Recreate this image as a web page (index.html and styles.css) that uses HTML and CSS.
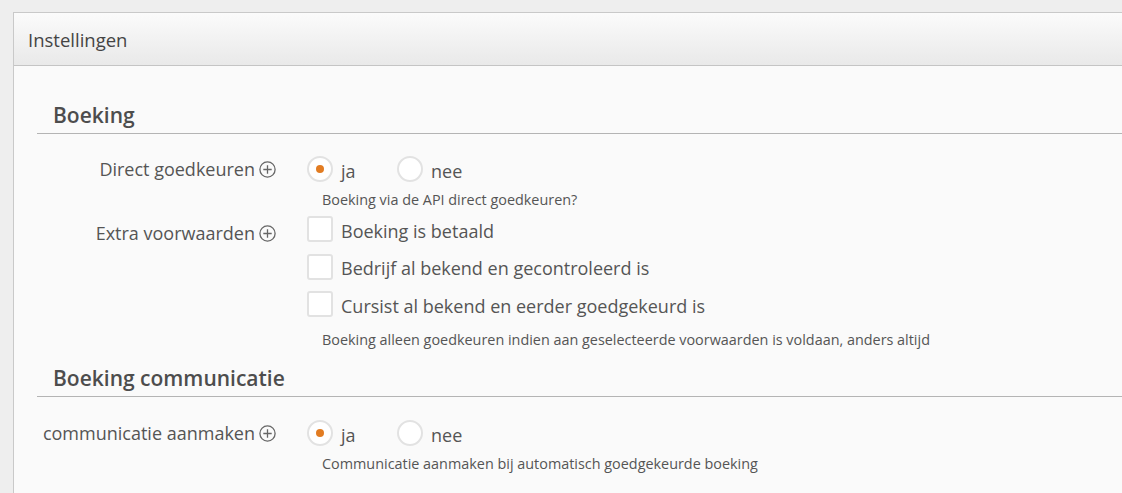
FILE: index.html
```html
<!DOCTYPE html>
<html lang="nl">
<head>
<meta charset="utf-8">
<title>Instellingen</title>
<link rel="stylesheet" href="styles.css">
</head>
<body>
<div class="panel">
  <div class="panel-head">Instellingen</div>
  <div class="panel-body">
    <section class="section">
      <h2 class="section-title">Boeking</h2>
      <div class="field">
        <div class="field-label">Direct goedkeuren
          <svg class="info" viewBox="0 0 17 17"><circle cx="8.5" cy="8.5" r="7.6"/><path d="M8.5 4.3v8.4M4.3 8.5h8.4"/></svg>
        </div>
        <div class="field-control">
          <div class="radios">
            <label class="radio"><span class="radio-box checked"></span><span class="opt-text">ja</span></label>
            <label class="radio"><span class="radio-box"></span><span class="opt-text">nee</span></label>
          </div>
          <p class="help">Boeking via de API direct goedkeuren?</p>
        </div>
      </div>
      <div class="field">
        <div class="field-label field-label-low">Extra voorwaarden
          <svg class="info" viewBox="0 0 17 17"><circle cx="8.5" cy="8.5" r="7.6"/><path d="M8.5 4.3v8.4M4.3 8.5h8.4"/></svg>
        </div>
        <div class="field-control">
          <div class="checks">
            <label class="check"><span class="check-box"></span><span class="opt-text">Boeking is betaald</span></label>
            <label class="check"><span class="check-box"></span><span class="opt-text">Bedrijf al bekend en gecontroleerd is</span></label>
            <label class="check"><span class="check-box"></span><span class="opt-text">Cursist al bekend en eerder goedgekeurd is</span></label>
          </div>
          <p class="help help-wide">Boeking alleen goedkeuren indien aan geselecteerde voorwaarden is voldaan, anders altijd</p>
        </div>
      </div>
    </section>
    <section class="section">
      <h2 class="section-title">Boeking communicatie</h2>
      <div class="field">
        <div class="field-label">communicatie aanmaken
          <svg class="info" viewBox="0 0 17 17"><circle cx="8.5" cy="8.5" r="7.6"/><path d="M8.5 4.3v8.4M4.3 8.5h8.4"/></svg>
        </div>
        <div class="field-control">
          <div class="radios">
            <label class="radio"><span class="radio-box checked"></span><span class="opt-text">ja</span></label>
            <label class="radio"><span class="radio-box"></span><span class="opt-text">nee</span></label>
          </div>
          <p class="help">Communicatie aanmaken bij automatisch goedgekeurde boeking</p>
        </div>
      </div>
    </section>
  </div>
</div>
</body>
</html>
```

FILE: styles.css
```css
html, body {
  margin: 0;
  padding: 0;
}
body {
  background: #eeeeee;
  font-family: "Open Sans", "DejaVu Sans", sans-serif;
  color: #555;
  overflow: hidden;
  height: 493px;
}
.panel {
  margin: 12px -40px 0 13px;
  border: 1px solid #c9c9c9;
  border-right: none;
  background: #fafafa;
  min-height: 500px;
}
.panel-head {
  height: 53px;
  box-sizing: border-box;
  padding: 0 14px;
  display: flex;
  align-items: center;
  font-size: 18.5px;
  color: #444;
  background: linear-gradient(#fbfbfb, #e9e9e9);
  border-bottom: 1px solid #c4c4c4;
}
.panel-body {
  padding: 35px 0 0 23px;
}
.section + .section {
  margin-top: 15px;
}
.section-title {
  margin: 0;
  padding: 0 0 4px 16px;
  font-size: 21px;
  line-height: 28px;
  font-weight: 600;
  color: #4d4d4d;
  border-bottom: 1px solid #b4b4b4;
}
.field {
  display: grid;
  grid-template-columns: 239px 1fr;
  column-gap: 31px;
}
.section-title + .field {
  margin-top: 22px;
}
.section + .section .section-title + .field {
  margin-top: 23px;
}
.field + .field {
  margin-top: 7px;
}
.field-label {
  display: flex;
  align-items: center;
  justify-content: flex-end;
  gap: 4px;
  height: 26px;
  font-size: 18px;
  white-space: nowrap;
  color: #555;
}
.field-label-low {
  margin-top: 4px;
}
.info {
  width: 17px;
  height: 17px;
  flex: none;
  fill: none;
  stroke: #666;
  stroke-width: 1.3;
}
.radios {
  display: flex;
  gap: 40px;
}
.radio, .check {
  display: flex;
  align-items: center;
  gap: 8px;
  height: 26px;
  font-size: 18px;
  color: #555;
}
.opt-text {
  padding-top: 3px;
}
.radio {
  min-width: 50px;
}
.radio-box {
  width: 26px;
  height: 26px;
  box-sizing: border-box;
  border: 2px solid #e2e2e2;
  border-radius: 50%;
  background: #fff;
  display: flex;
  align-items: center;
  justify-content: center;
  flex: none;
}
.radio-box.checked::after {
  content: "";
  width: 8px;
  height: 8px;
  border-radius: 50%;
  background: #e27c22;
}
.checks {
  display: flex;
  flex-direction: column;
  gap: 11.5px;
}
.check-box {
  width: 26px;
  height: 26px;
  box-sizing: border-box;
  border: 2px solid #e2e2e2;
  border-radius: 3px;
  background: #fff;
  flex: none;
}
.help {
  margin: 9px 0 0 15px;
  font-size: 14.4px;
  line-height: 18px;
  color: #555;
}
.help-wide {
  margin-top: 14px;
}
```
